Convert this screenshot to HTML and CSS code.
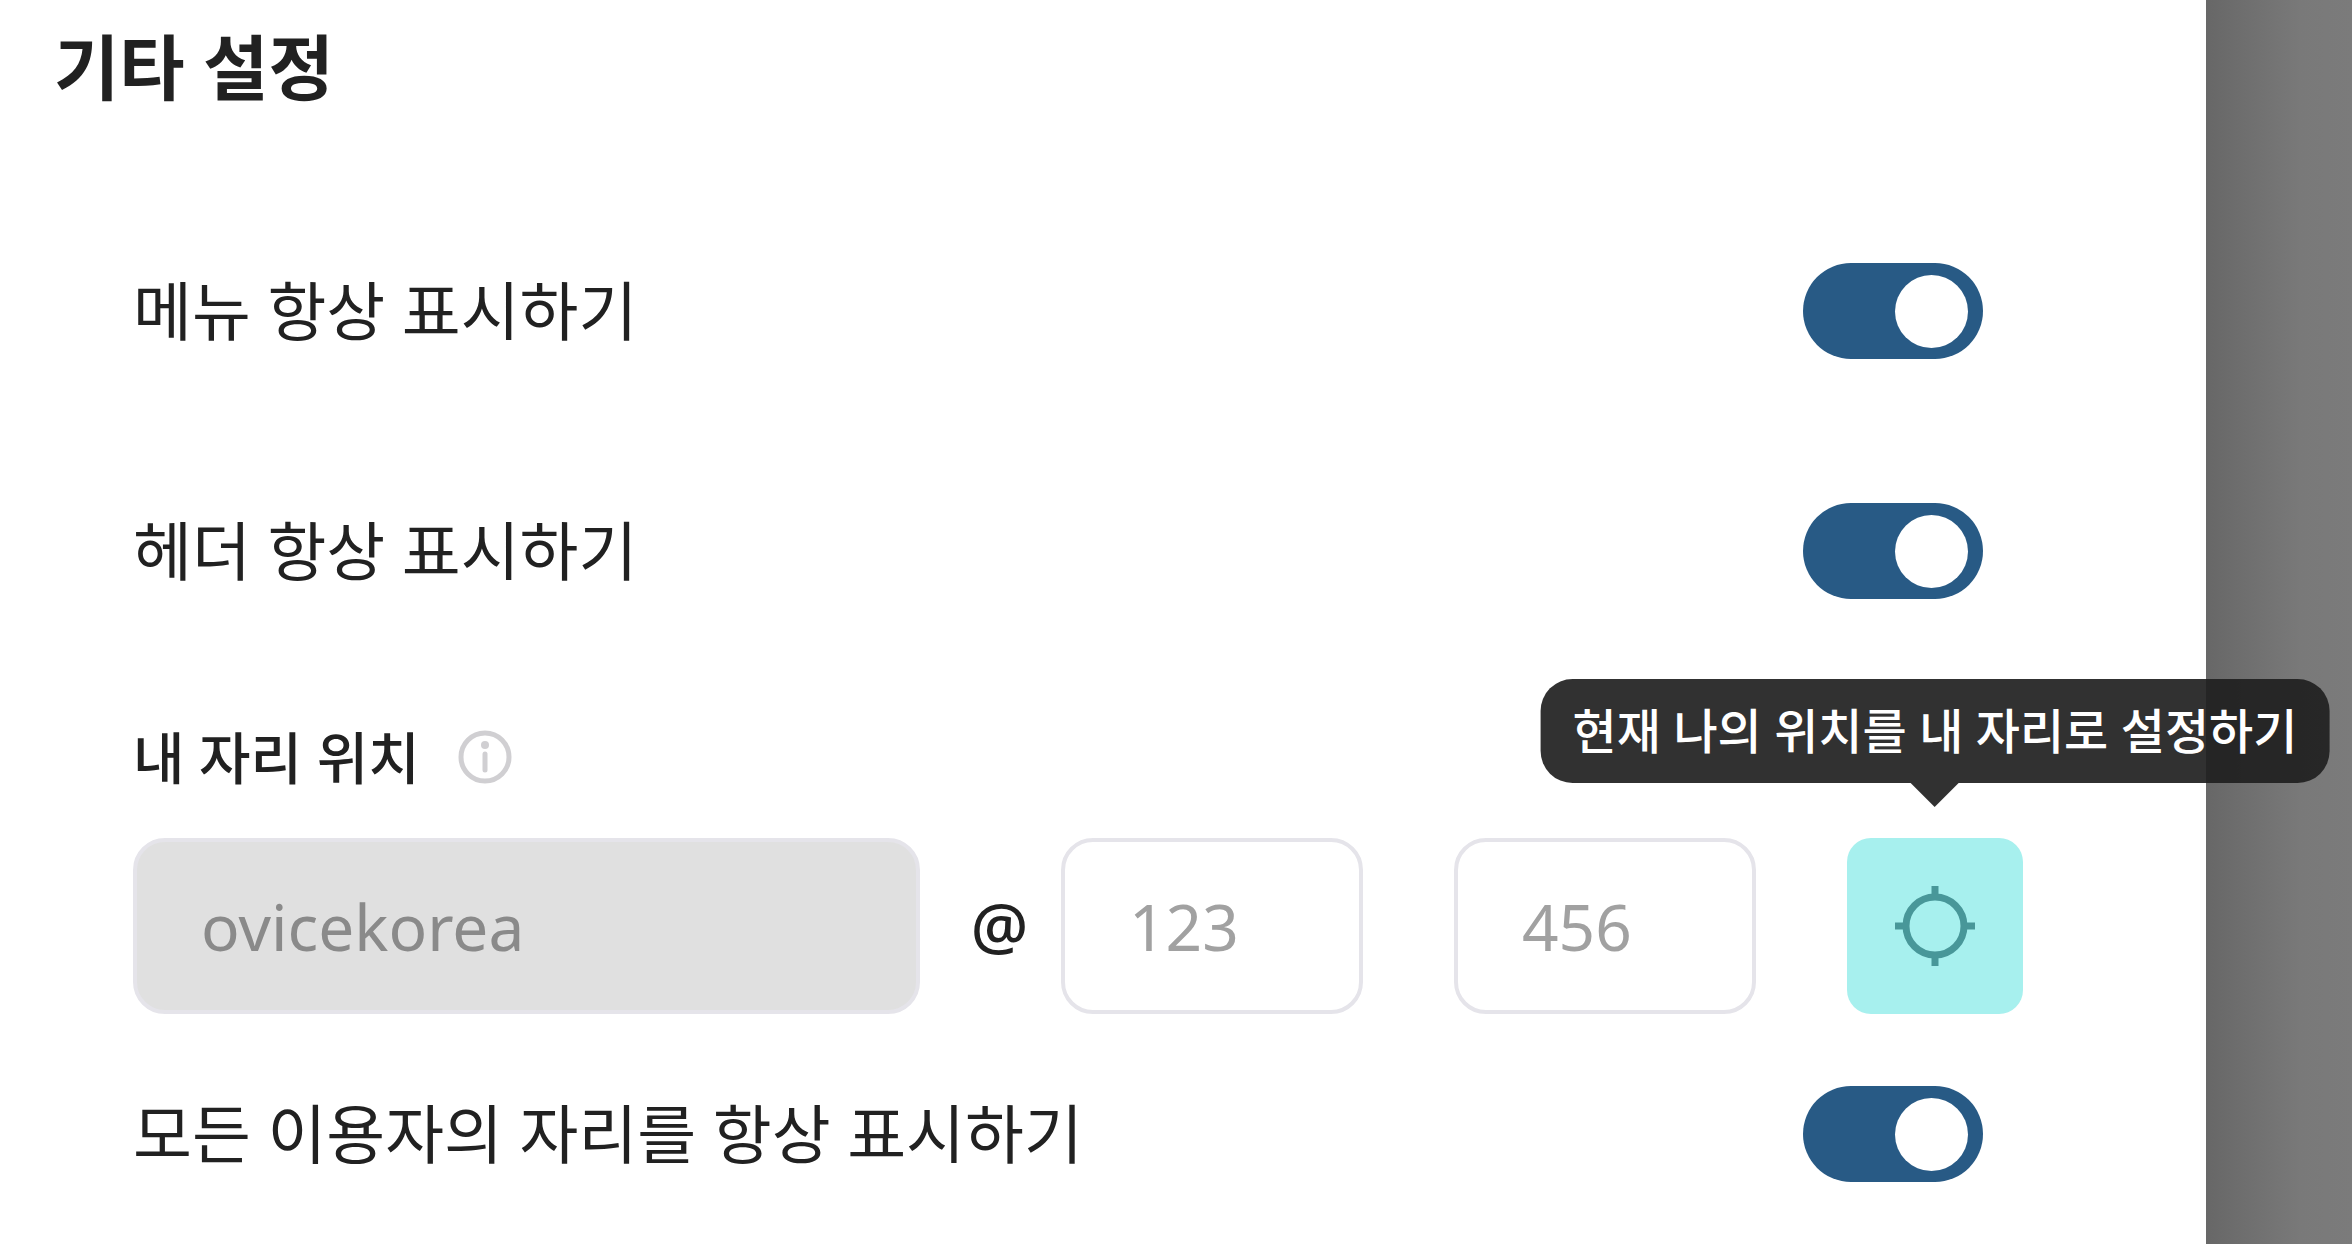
FILE: index.html
```html
<!DOCTYPE html>
<html lang="ko">
<head>
<meta charset="utf-8">
<title>기타 설정</title>
<link rel="stylesheet" href="styles.css">
</head>
<body>
<main class="panel">
  <h1 class="title">기타 설정</h1>
  <form class="settings">
    <label class="row">메뉴 항상 표시하기<input class="switch" type="checkbox" role="switch" checked></label>
    <label class="row">헤더 항상 표시하기<input class="switch" type="checkbox" role="switch" checked></label>
    <section class="seat">
      <h2 class="seat-title">내 자리 위치
        <svg class="info" viewBox="0 0 54 54" aria-hidden="true"><circle cx="27" cy="27" r="24" fill="none" stroke="#d0cfd2" stroke-width="5"/><circle cx="27" cy="15" r="4" fill="#d0cfd2"/><path d="M27 24v16" stroke="#d0cfd2" stroke-width="5" stroke-linecap="round"/></svg>
      </h2>
      <div class="fields">
        <input class="field workspace" type="text" value="ovicekorea" aria-label="워크스페이스" disabled>
        <span class="at">@</span>
        <input class="field coord" type="text" placeholder="123" aria-label="X">
        <input class="field coord" type="text" placeholder="456" aria-label="Y">
        <div class="locate-wrap">
          <button class="locate" type="button" aria-describedby="locate-tip" aria-label="위치 설정">
            <svg class="target" viewBox="0 0 80 80" aria-hidden="true"><g fill="none" stroke="#489799" stroke-width="7"><circle cx="40" cy="40" r="29"/><path d="M40 0v10M40 70v10M0 40h10M70 40h10"/></g></svg>
          </button>
          <div class="tooltip" id="locate-tip" role="tooltip">현재 나의 위치를 내 자리로 설정하기</div>
        </div>
      </div>
    </section>
    <label class="row">모든 이용자의 자리를 항상 표시하기<input class="switch" type="checkbox" role="switch" checked></label>
  </form>
</main>
</body>
</html>
```
FILE: styles.css
```css
* { box-sizing: border-box; }
body {
  margin: 0;
  min-height: 100vh;
  display: flex;
  background: linear-gradient(90deg, #676767 0, #797979 65%, #7b7b7b 100%) right / 147px 100% no-repeat;
  color: #212121;
  font-family: "Noto Sans", "Noto Sans CJK KR", sans-serif;
}
.panel {
  flex: 1;
  min-width: 0;
  margin-right: 146px;
  padding: 15px 183px 0 54px;
  background: #fff;
}
.title { margin: 0; font-size: 71px; line-height: 104px; font-weight: 700; }
.settings { padding: 72px 0 0 79px; }
.row {
  display: flex;
  align-items: center;
  justify-content: space-between;
  height: 240px;
  padding-right: 40px;
  font-size: 64px;
  line-height: 96px;
}
.switch {
  appearance: none;
  flex: none;
  display: flex;
  justify-content: flex-end;
  width: 180px;
  height: 96px;
  margin: 0;
  padding: 12px 15px;
  border-radius: 48px;
  background: #285a85;
}
.switch::before { content: ""; width: 73px; height: 73px; border-radius: 50%; background: #fff; }
.seat-title {
  display: flex;
  align-items: center;
  gap: 38px;
  margin: 0;
  padding: 47px 0 42px;
  font-size: 56px;
  line-height: 78px;
  font-weight: 500;
}
.info { width: 54px; height: 54px; }
.fields { display: flex; align-items: center; }
.field {
  height: 176px;
  min-width: 0;
  padding: 0 64px;
  border: 4px solid #e5e4ea;
  border-radius: 32px;
  background: #fff;
  font: 400 64px "Noto Sans", "Noto Sans CJK KR", sans-serif;
}
.field::placeholder { color: #a1a1a1; }
.workspace { flex: 1; background: #e0e0e0; color: #8a8a8a; }
.at { width: 141px; padding-left: 18px; text-align: center; font-size: 64px; line-height: 88px; font-weight: 500; }
.coord { flex: none; width: 302px; margin-right: 91px; }
.locate-wrap { position: relative; }
.locate {
  display: grid;
  place-items: center;
  width: 176px;
  height: 176px;
  padding: 0;
  border: 0;
  border-radius: 24px;
  background: #a7f0ee;
}
.target { width: 80px; height: 80px; }
.tooltip {
  position: absolute;
  bottom: 231px;
  left: 50%;
  transform: translateX(-50%);
  padding: 16px 32px;
  border-radius: 32px;
  background: rgba(31, 31, 31, .92);
  color: #fff;
  font-size: 48px;
  line-height: 72px;
  font-weight: 500;
  white-space: nowrap;
}
.tooltip::after {
  content: "";
  position: absolute;
  top: 100%;
  left: 50%;
  margin-left: -24px;
  border: 24px solid transparent;
  border-top-color: rgba(31, 31, 31, .92);
  border-bottom: 0;
}
```
